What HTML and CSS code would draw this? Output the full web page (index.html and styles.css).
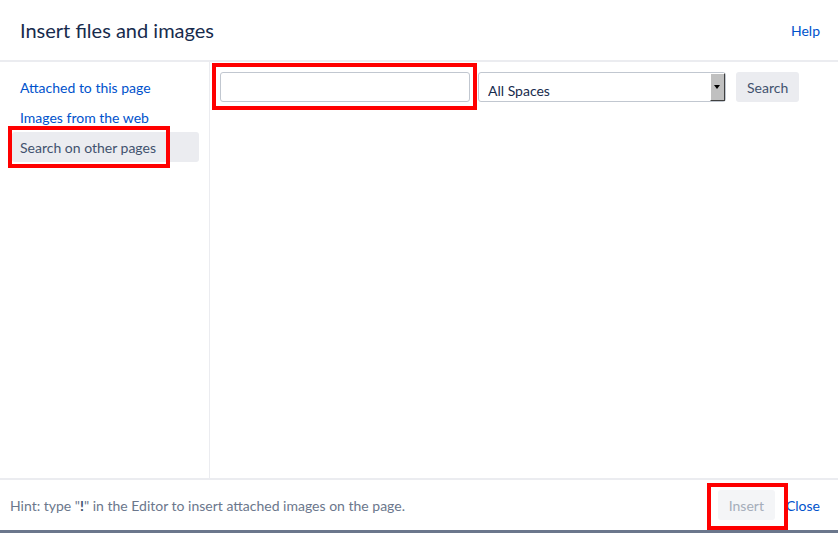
FILE: index.html
```html
<!DOCTYPE html>
<html lang="en">
<head>
    <meta charset="UTF-8">
    <title>Insert files and images</title>
    <link rel="stylesheet" href="styles.css">
</head>
<body>
    <div class="dialog">
        <div class="dialog-header">
            <h2>Insert files and images</h2>
            <a href="#" class="help-link">Help</a>
        </div>
        <div class="dialog-body">
            <div class="sidebar">
                <a href="#" class="nav-item">Attached to this page</a>
                <a href="#" class="nav-item">Images from the web</a>
                <a href="#" class="nav-item selected">Search on other pages</a>
            </div>
            <div class="main-panel">
                <div class="search-row">
                    <input type="text" class="search-input">
                    <div class="space-select">
                        <select>
                            <option>All Spaces</option>
                        </select>
                        <span class="select-arrow"></span>
                    </div>
                    <button class="search-button">Search</button>
                </div>
            </div>
        </div>
        <div class="dialog-footer">
            <span class="hint">Hint: type "<b>!</b>" in the Editor to insert attached images on the page.</span>
            <div class="footer-actions">
                <button class="insert-button" disabled>Insert</button>
                <a href="#" class="close-link">Close</a>
            </div>
        </div>

        <!-- annotation boxes -->
        <div class="mark mark-nav"></div>
        <div class="mark mark-input"></div>
        <div class="mark mark-insert"></div>
    </div>
</body>
</html>
```

FILE: styles.css
```css
* {
    margin: 0;
    padding: 0;
    box-sizing: border-box;
}
html, body {
    width: 838px;
    height: 533px;
    overflow: hidden;
    background: #fff;
    font-family: Lato, 'Liberation Sans', sans-serif;
    color: #172b4d;
}
a {
    color: #0052cc;
    text-decoration: none;
}
.dialog {
    position: relative;
    height: 533px;
    display: flex;
    flex-direction: column;
    border-bottom: 3px solid #6b778c;
}
.dialog-header {
    height: 62px;
    border-bottom: 2px solid #ebecf0;
    display: flex;
    align-items: center;
    justify-content: space-between;
    padding: 0 18px 0 20px;
}
.dialog-header h2 {
    font-size: 20px;
    font-weight: normal;
    color: #172b4d;
}
.help-link {
    font-size: 14px;
}
.dialog-body {
    display: flex;
    height: 416px;
}
.sidebar {
    width: 210px;
    border-right: 1px solid #ebecf0;
    padding: 10px 10px 0 12px;
    display: flex;
    flex-direction: column;
}
.nav-item {
    height: 30px;
    line-height: 28px;
    padding: 2px 0 0 8px;
    font-size: 14px;
    border-radius: 3px;
}
.nav-item.selected {
    background: #ebecf0;
    color: #42526e;
}
.main-panel {
    flex: 1;
    padding: 10px;
}
.search-row {
    display: flex;
    gap: 8px;
}
.search-input {
    width: 250px;
    height: 30px;
    border: 1px solid #c1c7d0;
    border-radius: 3px;
    font-family: inherit;
}
.space-select {
    position: relative;
    width: 248px;
    height: 30px;
    margin-right: 2px;
}
.space-select select {
    appearance: none;
    width: 100%;
    height: 100%;
    border: 1px solid #c1c7d0;
    border-radius: 3px;
    background: #fff;
    padding: 6px 0 0 9px;
    font-family: inherit;
    font-size: 14px;
    color: #172b4d;
}
.select-arrow {
    position: absolute;
    top: 1px;
    right: 1px;
    width: 15px;
    height: 28px;
    background: #c0c0c0;
    border-left: 1px solid #fff;
    border-top: 1px solid #fff;
    border-right: 1px solid #404040;
    border-bottom: 1px solid #404040;
}
.select-arrow::after {
    content: '';
    position: absolute;
    left: 3px;
    top: 11px;
    border-left: 3px solid transparent;
    border-right: 3px solid transparent;
    border-top: 4px solid #000;
}
.search-button {
    height: 30px;
    padding: 0 11px;
    border: none;
    border-radius: 3px;
    background: #ebecf0;
    color: #42526e;
    font-family: inherit;
    font-size: 14px;
}
.dialog-footer {
    flex: 1;
    border-top: 2px solid #ebecf0;
    display: flex;
    align-items: center;
    justify-content: space-between;
    padding: 0 18px 0 10px;
}
.hint {
    font-size: 14px;
    color: #6b778c;
}
.hint b {
    color: #42526e;
}
.footer-actions {
    display: flex;
    align-items: center;
    gap: 11px;
}
.insert-button {
    height: 30px;
    padding: 0 11px;
    border: none;
    border-radius: 3px;
    background: #f4f5f7;
    color: #a5adba;
    font-family: inherit;
    font-size: 14px;
}
.close-link {
    font-size: 14px;
}
.mark {
    position: absolute;
    border: 4px solid #ff0000;
}
.mark-nav {
    left: 8px;
    top: 126px;
    width: 162px;
    height: 42px;
}
.mark-input {
    left: 212px;
    top: 63px;
    width: 265px;
    height: 47px;
}
.mark-insert {
    left: 707px;
    top: 483px;
    width: 81px;
    height: 47px;
}
```
